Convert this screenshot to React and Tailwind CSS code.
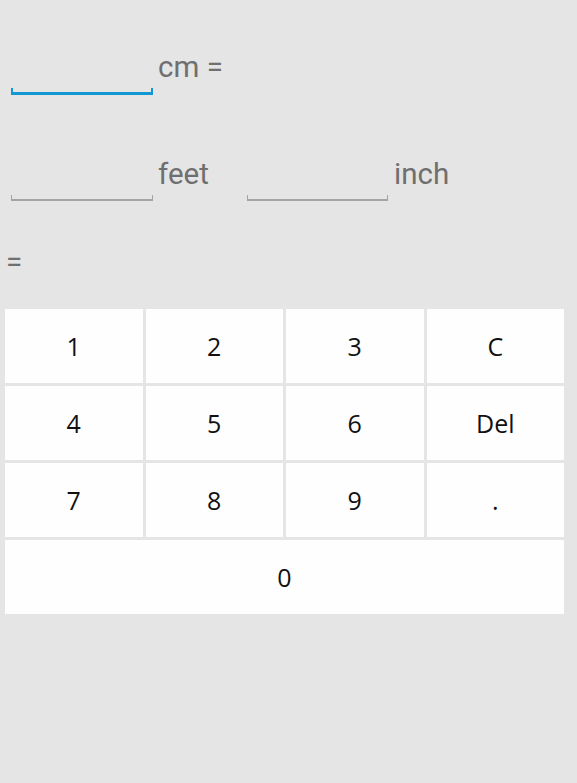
export default function App() {
  const keys = ["1", "2", "3", "C", "4", "5", "6", "Del", "7", "8", "9", "."];
  const label = "text-[29.5px] leading-[32px] text-[#6f6f6f]";
  return (
    <div className="min-h-[783px] w-[577px] bg-[#e5e5e5]" style={{ fontFamily: "Roboto, sans-serif" }}>
      <div className="h-[309px] pt-[51px]">
        <div className="flex items-start h-[107px]">
          <div className="ml-[11px] mt-[37px] w-[142px] h-[7px] border-x-2 border-b-[3px] border-[#1198d2]" />
          <div className={`ml-[5px] ${label}`}>cm =</div>
        </div>
        <div className="flex items-start h-[88px]">
          <div className="ml-[11px] mt-[37px] w-[142px] h-[6px] border-x border-b-2 border-[#a3a3a3]" />
          <div className={`ml-[5px] w-[89px] ${label}`}>feet</div>
          <div className="mt-[37px] w-[141px] h-[6px] border-x border-b-2 border-[#a3a3a3]" />
          <div className={`ml-[6px] ${label}`}>inch</div>
        </div>
        <div className={`ml-[6px] ${label}`}>=</div>
      </div>
      <div className="mx-[5px] w-[559px] grid grid-cols-4 gap-[3px]" style={{ fontFamily: "'Open Sans', sans-serif" }}>
        {keys.map((k) => (
          <div key={k} className="h-[74px] pt-[2px] bg-[#fefefe] flex items-center justify-center text-[25px] text-[#111]">
            {k}
          </div>
        ))}
        <div className="col-span-4 h-[74px] pt-[2px] bg-[#fefefe] flex items-center justify-center text-[25px] text-[#111]">0</div>
      </div>
    </div>
  );
}
